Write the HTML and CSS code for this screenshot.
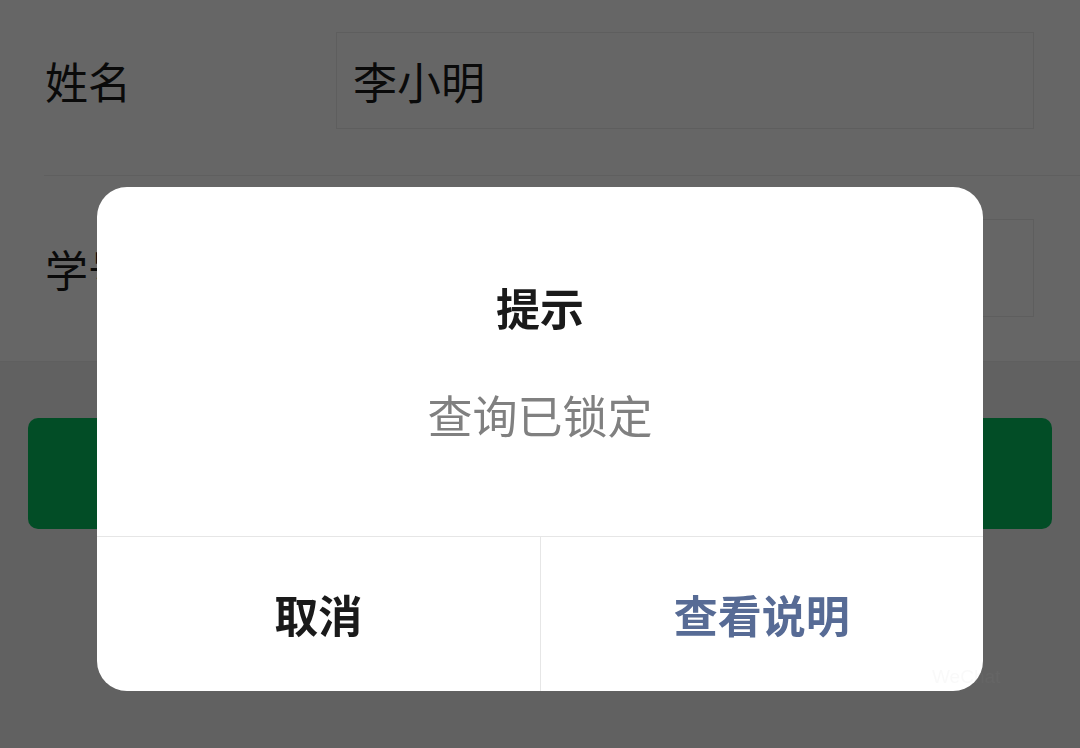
FILE: index.html
```html
<!DOCTYPE html>
<html lang="zh-CN">
<head>
<meta charset="utf-8">
<title>查询</title>
<link rel="stylesheet" href="styles.css">
</head>
<body>
<div class="page">
  <div class="form">
    <div class="row row-first">
      <div class="label">姓名</div>
      <div class="input">李小明</div>
    </div>
    <div class="row row-second">
      <div class="label">学号</div>
      <div class="input"></div>
    </div>
  </div>
  <div class="actions">
    <div class="btn-primary">查询</div>
  </div>
</div>

<div class="mask"></div>

<div class="dialog">
  <div class="dialog-hd">提示</div>
  <div class="dialog-bd">查询已锁定</div>
  <div class="dialog-ft">
    <div class="dialog-btn dialog-btn-default">取消</div>
    <div class="dialog-btn dialog-btn-primary">查看说明</div>
  </div>
</div>

<div class="watermark">WeChat</div>
</body>
</html>
```

FILE: styles.css
```css
* { box-sizing: border-box; }

html, body {
  margin: 0;
  padding: 0;
  width: 1080px;
  height: 748px;
  overflow: hidden;
}

body {
  font-family: "Noto Sans CJK SC", "Noto Sans", sans-serif;
  background: #f3f3f3;
}

.page {
  width: 1080px;
  height: 748px;
}

.form {
  background: #ffffff;
  border-bottom: 1px solid #ededed;
}

.row {
  display: flex;
  align-items: center;
  margin-left: 44px;
  padding-right: 46px;
}

.row-first {
  padding-top: 32px;
  padding-bottom: 46px;
  border-bottom: 1px solid #ededed;
}

.row-second {
  padding-top: 43px;
  padding-bottom: 44px;
}

.label {
  width: 292px;
  font-size: 43px;
  line-height: 1;
  color: #1a1a1a;
  padding-left: 1px;
}

.input {
  flex: 1;
  height: 97px;
  border: 1px solid #ebebeb;
  background: #ffffff;
  padding-left: 16px;
  display: flex;
  align-items: center;
  font-size: 44px;
  color: #1a1a1a;
}

.row-second .input {
  height: 98px;
}

.actions {
  padding: 56px 28px 0 28px;
}

.btn-primary {
  height: 111px;
  border-radius: 10px;
  background: #07c160;
  color: #ffffff;
  font-size: 44px;
  font-weight: 700;
  display: flex;
  align-items: center;
  justify-content: center;
}

.mask {
  position: fixed;
  inset: 0;
  background: rgba(0, 0, 0, 0.6);
}

.dialog {
  position: fixed;
  left: 97px;
  top: 187px;
  width: 886px;
  height: 504px;
  background: #ffffff;
  border-radius: 30px;
  overflow: hidden;
  display: flex;
  flex-direction: column;
  text-align: center;
}

.dialog-hd {
  padding-top: 89px;
  font-size: 44px;
  line-height: 62px;
  font-weight: 700;
  color: #1a1a1a;
}

.dialog-bd {
  padding-top: 46px;
  padding-bottom: 90px;
  font-size: 45px;
  line-height: 62px;
  color: #808080;
}

.dialog-ft {
  flex: 1;
  display: flex;
  border-top: 1px solid #e6e6e6;
}

.dialog-btn {
  flex: 1;
  display: flex;
  align-items: center;
  justify-content: center;
  font-size: 44px;
  font-weight: 700;
}

.dialog-btn-default {
  color: #1a1a1a;
  border-right: 1px solid #e6e6e6;
}

.dialog-btn-primary {
  color: #576b95;
}

.watermark {
  position: fixed;
  left: 932px;
  top: 666px;
  font-family: "Liberation Sans", sans-serif;
  font-size: 19px;
  color: rgba(160, 160, 160, 0.06);
}
```
